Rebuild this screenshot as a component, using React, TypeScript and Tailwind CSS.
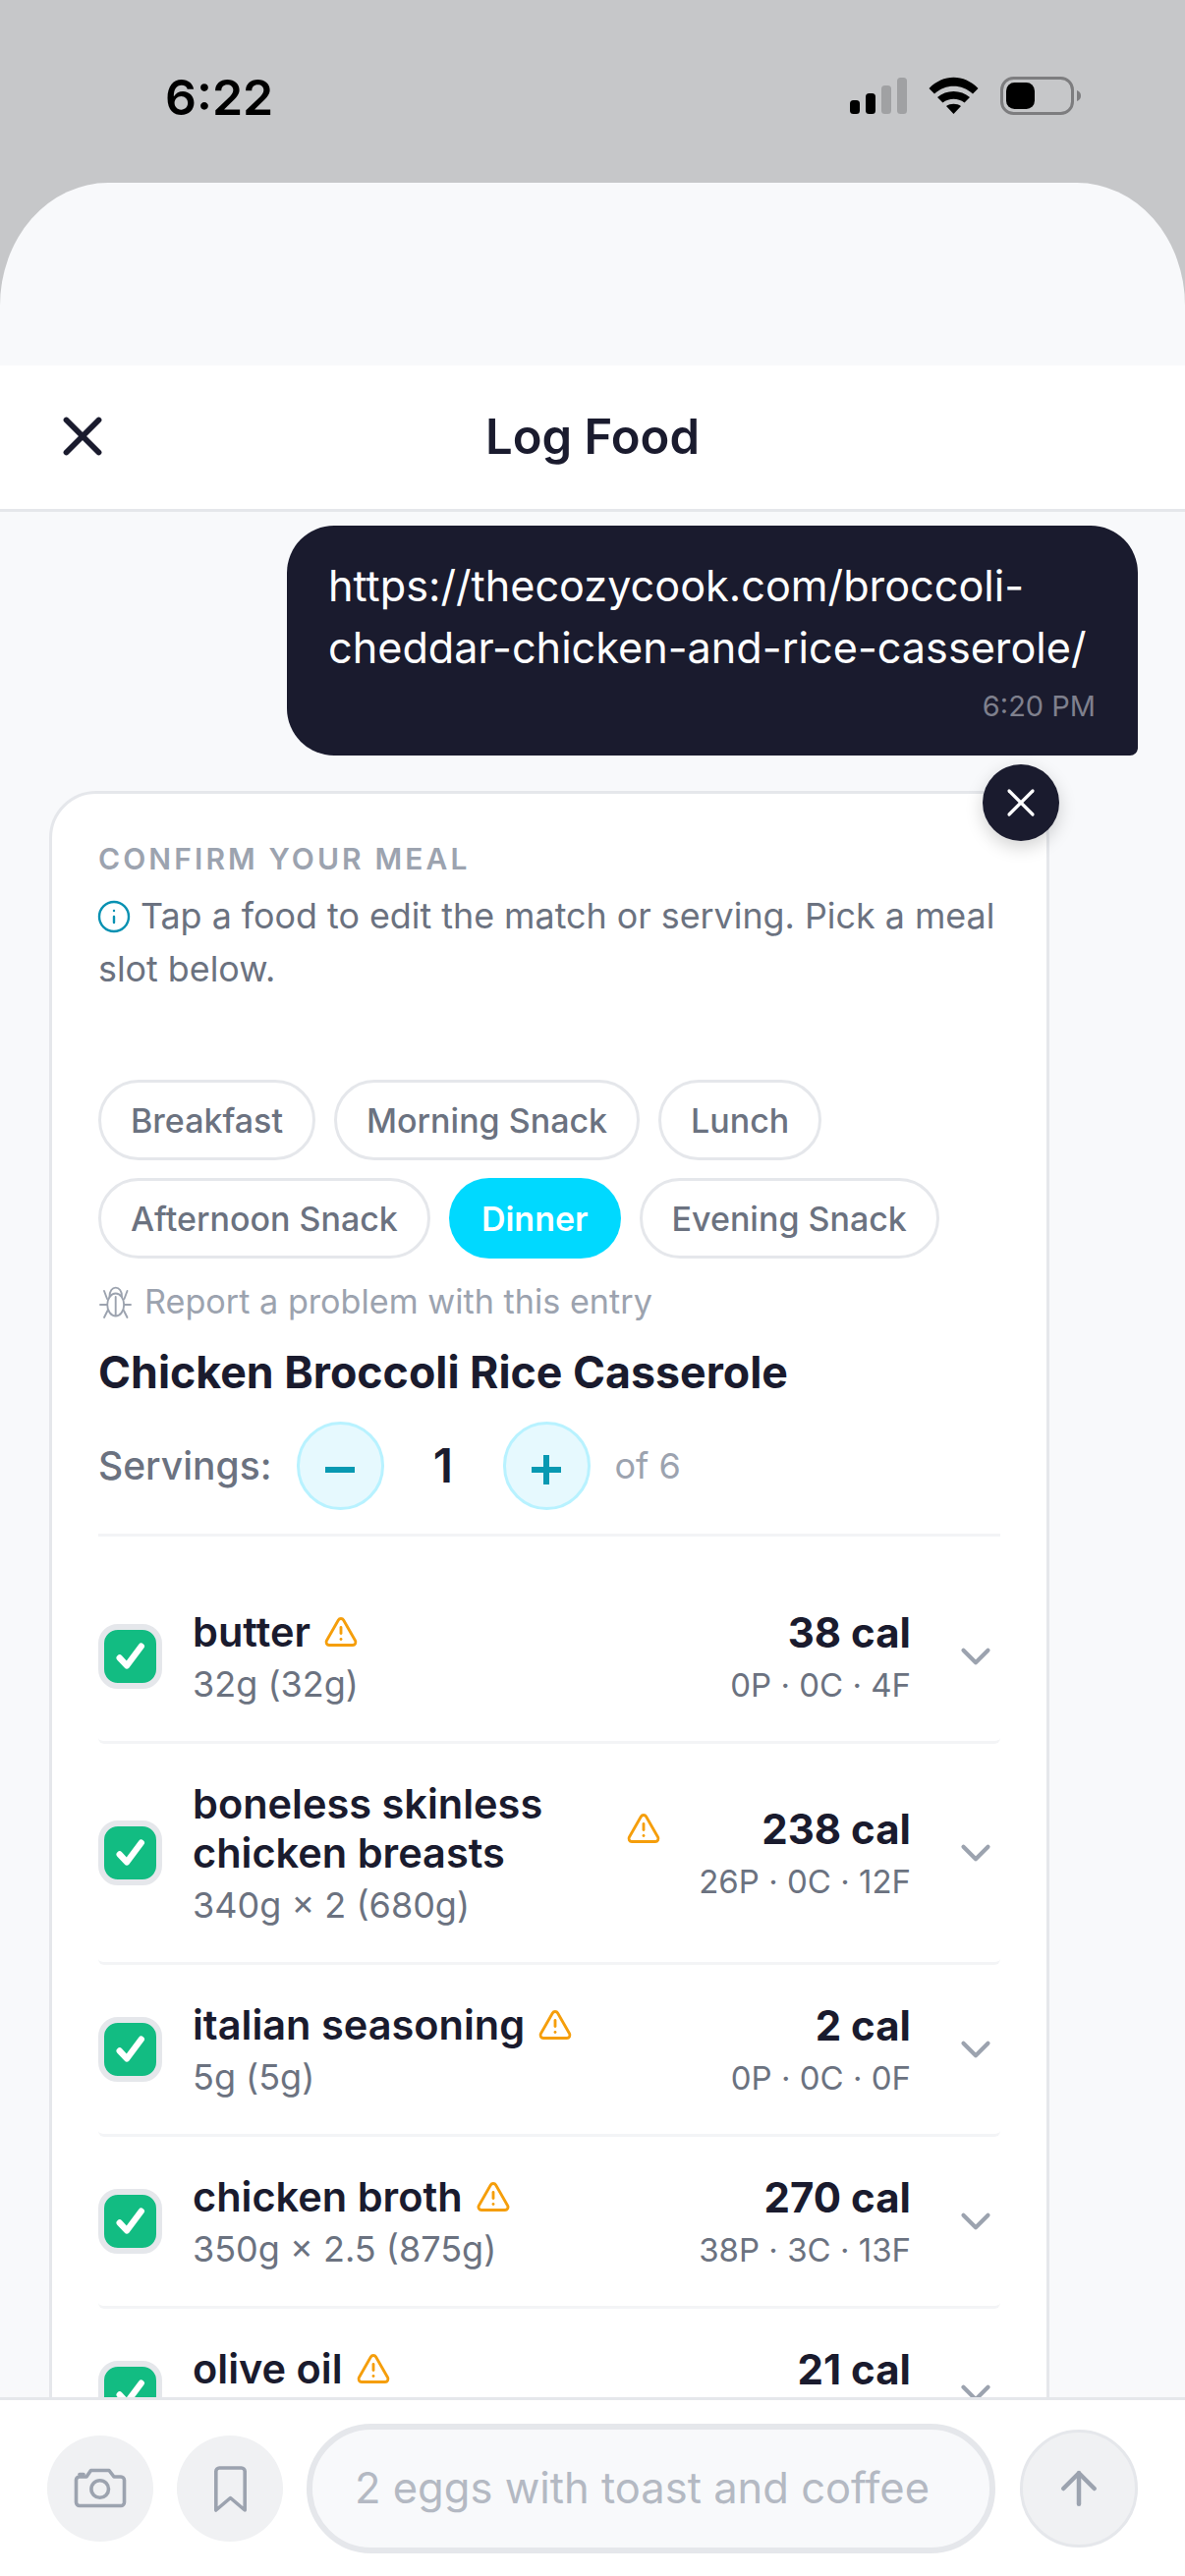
import { X, Info, TriangleAlert, ChevronDown, ArrowUp } from "lucide-react";

const slots = [
  ["Breakfast", "Morning Snack", "Lunch"],
  ["Afternoon Snack", "Dinner", "Evening Snack"],
];

const foods = [
  { name: "butter", amount: "32g (32g)", cal: "38 cal", macros: "0P · 0C · 4F" },
  { name: "boneless skinless chicken breasts", amount: "340g × 2 (680g)", cal: "238 cal", macros: "26P · 0C · 12F" },
  { name: "italian seasoning", amount: "5g (5g)", cal: "2 cal", macros: "0P · 0C · 0F" },
  { name: "chicken broth", amount: "350g × 2.5 (875g)", cal: "270 cal", macros: "38P · 3C · 13F" },
  { name: "olive oil", amount: "15g (15g)", cal: "21 cal", macros: "2P · 0C · 2F" },
];

function StatusIcons() {
  return (
    <svg width="240" height="44" viewBox="860 76 240 44" className="block">
      <rect x="865" y="102" width="10" height="14" rx="3.5" fill="#000" />
      <rect x="881" y="95" width="10" height="21" rx="3.5" fill="#000" />
      <rect x="897" y="87" width="10" height="29" rx="3.5" fill="#a0a1a3" />
      <rect x="913" y="79" width="10" height="37" rx="3.5" fill="#a0a1a3" />
      <path d="M945.5 90 C 960 75, 981 75, 995.5 90 L 990 95.5 C 979 85, 962 85, 951 95.5 Z" fill="#000" />
      <path d="M954 99 C 963 91, 978 91, 987 99 L 981.5 104.5 C 975 99.5, 966 99.5, 959.5 104.5 Z" fill="#000" />
      <path d="M963 108 C 967 105, 974 105, 978 108 L 970.5 116 Z" fill="#000" />
      <rect x="1019.5" y="79.5" width="72" height="36" rx="12" fill="none" stroke="#7d7d7f" strokeWidth="3" />
      <rect x="1024" y="84" width="29" height="27" rx="8.5" fill="#000" />
      <path d="M1096 92 C 1099 93, 1100 95, 1100 97.5 C 1100 100, 1099 102, 1096 103 Z" fill="#7d7d7f" />
    </svg>
  );
}

function BugIcon() {
  return (
    <svg width="36" height="36" viewBox="100 1306 36 36" fill="none" stroke="#9ca3af" strokeWidth="1.9" strokeLinecap="round" strokeLinejoin="round" className="shrink-0">
      <ellipse cx="117.7" cy="1327" rx="8.5" ry="11.5" />
      <path d="M111.5 1319 C 111 1306.5, 124.5 1306.5, 124 1319" />
      <path d="M117.7 1319 V1338" />
      <path d="M102 1327 H109 M126.5 1327 H133" />
      <path d="M106 1313 L109 1321 M129.5 1313 L126.5 1321" />
      <path d="M109.5 1333 L106 1340 M126 1333 L129.5 1340" />
    </svg>
  );
}

function CheckMark() {
  return (
    <svg width="54" height="54" viewBox="0 0 54 54" fill="none" stroke="#fff" strokeWidth="6.5" strokeLinecap="round" strokeLinejoin="round">
      <path d="M16 28.5 L23.5 36.5 L38.5 16.5" />
    </svg>
  );
}

function CameraIcon() {
  return (
    <svg width="60" height="50" viewBox="72 2508 60 50" fill="none" stroke="#9ca3af" strokeWidth="3.6" strokeLinejoin="round" strokeLinecap="round">
      <path d="M80.5 2521 H88 L92.5 2514.5 H111 L116 2521 H123 a3.5 3.5 0 0 1 3.5 3.5 V2547 a3.5 3.5 0 0 1 -3.5 3.5 H81 a3.5 3.5 0 0 1 -3.5 -3.5 V2524 a3.5 3.5 0 0 1 3 -3 Z" />
      <path d="M81 2518.5 H85" />
      <circle cx="101.7" cy="2533.5" r="8.8" />
    </svg>
  );
}

function BookmarkIcon() {
  return (
    <svg width="40" height="54" viewBox="214 2504 40 54" fill="none" stroke="#9ca3af" strokeWidth="3.6" strokeLinejoin="round" strokeLinecap="round">
      <path d="M219.8 2553 V2513.5 a3.5 3.5 0 0 1 3.5 -3.5 H245.7 a3.5 3.5 0 0 1 3.5 3.5 V2553 L234.5 2540.5 Z" />
    </svg>
  );
}

function Stepper({ plus }: { plus?: boolean }) {
  return (
    <div className="w-[89px] h-[90px] shrink-0 rounded-full border-[3px] border-[#b8f2ff] bg-[#e6f9fe] flex items-center justify-center">
      <svg width="30" height="30" viewBox="0 0 30 30" className="mt-[7px]" stroke="#0899b2" strokeWidth="6" fill="none">
        <path d="M0 15 H30" />
        {plus ? <path d="M15 0 V30" /> : null}
      </svg>
    </div>
  );
}

function FoodRow({ name, amount, cal, macros }: { name: string; amount: string; cal: string; macros: string }) {
  return (
    <div className="flex items-center border-b-[3px] border-[#f3f4f6] rounded-b-[6px] py-[36px]">
      <div className="w-[65px] h-[66px] shrink-0 rounded-[20px] border-[6px] border-[#e5e7eb] bg-[#12bc82] flex items-center justify-center">
        <CheckMark />
      </div>
      <div className="flex-1 min-w-0 ml-[31px] flex flex-col">
        <div className="flex items-center gap-[13px]">
          <span className="text-[41.5px] leading-[50px] font-semibold text-[#1a1b2e]">{name}</span>
          <TriangleAlert size={36} color="#f59e0b" strokeWidth={1.9} className="shrink-0" />
        </div>
        <span className="mt-[7px] text-[36px] leading-[43px] text-[#6b7280]">{amount}</span>
      </div>
      <div className="shrink-0 ml-[38px] flex flex-col items-end">
        <span className="text-[42px] leading-[52px] font-bold text-[#1a1b2e]">{cal}</span>
        <span className="mt-[6px] text-[33px] leading-[42px] text-[#6b7280]">{macros}</span>
      </div>
      <ChevronDown size={50} color="#9ca3af" strokeWidth={2} className="shrink-0 ml-[41px]" />
    </div>
  );
}

export default function App() {
  return (
    <div className="w-[1206px] h-[2622px] overflow-hidden flex flex-col bg-[#c6c7c9] font-['Inter',sans-serif]">
      <div className="h-[186px] shrink-0 flex items-start justify-between pl-[168px] pr-[106px]">
        <span className="mt-[68px] text-[50px] leading-[62px] font-semibold text-black">6:22</span>
        <div className="mt-[76px]">
          <StatusIcons />
        </div>
      </div>
      <div className="flex-1 min-h-0 flex flex-col bg-[#f8f9fb] rounded-tl-[110px_125px] rounded-tr-[110px_125px]">
        <div className="h-[186px] shrink-0" />
        <header className="h-[149px] shrink-0 relative flex items-center justify-center bg-white border-b-[3px] border-[#e5e7eb]">
          <X size={66} color="#1a1b2e" strokeWidth={2.1} className="absolute left-[51px] top-[39px]" />
          <h1 className="text-[49px] font-semibold text-[#1a1b2e]">Log Food</h1>
        </header>
        <main className="flex-1 min-h-0 overflow-hidden flex flex-col pt-[14px]">
          <div className="self-end mr-[48px] w-[866px] h-[234px] shrink-0 rounded-[48px] rounded-br-[8px] bg-[#1a1b2e] pl-[42px] pr-[40px] pt-[30px] flex flex-col">
            <p className="text-[43.2px] leading-[63px] text-white">https://thecozycook.com/broccoli-cheddar-chicken-and-rice-casserole/</p>
            <span className="self-end mr-[3px] text-[29px] leading-[44px] mt-[6px] text-[#7f808d]">6:20 PM</span>
          </div>
          <section className="relative ml-[50px] mt-[36px] w-[1018px] shrink-0 rounded-t-[48px] border-[3px] border-[#e5e7eb] bg-white px-[47px] pt-[46px]">
            <button className="absolute -top-[30px] -right-[13px] w-[78px] h-[78px] rounded-full bg-[#1a1b2e] flex items-center justify-center shadow-[0_6px_18px_rgba(0,0,0,0.18)]">
              <X size={48} color="#fff" strokeWidth={1.6} />
            </button>
            <div className="text-[30px] leading-[40px] font-semibold tracking-[3.1px] text-[#9ca3af]">CONFIRM YOUR MEAL</div>
            <p className="mt-[11px] text-[35.85px] leading-[54px] text-[#6b7280]">
              <Info size={36} color="#0891b2" strokeWidth={1.6} className="inline-block align-[-6px] -ml-[2px] mr-[9px]" />
              Tap a food to edit the match or serving. Pick a meal slot below.
            </p>
            <div className="mt-[86px] flex flex-col gap-[18px]">
              {slots.map((row, i) => (
                <div key={i} className="flex gap-[19px]">
                  {row.map((s) =>
                    s === "Dinner" ? (
                      <span key={s} className="h-[82px] flex items-center px-[33px] rounded-full bg-[#00d9ff] text-[34px] font-semibold text-white">{s}</span>
                    ) : (
                      <span key={s} className="h-[82px] flex items-center px-[30px] rounded-full border-[3px] border-[#e5e7eb] bg-white text-[34px] font-medium text-[#6b7280]">{s}</span>
                    )
                  )}
                </div>
              ))}
            </div>
            <div className="mt-[23px] flex items-center gap-[11px]">
              <BugIcon />
              <span className="text-[34.2px] leading-[42px] text-[#9ca3af]">Report a problem with this entry</span>
            </div>
            <h2 className="mt-[21px] text-[44.7px] leading-[60px] font-bold text-[#1a1b2e]">Chicken Broccoli Rice Casserole</h2>
            <div className="mt-[20px] pb-[24px] flex items-center border-b-[3px] border-[#f3f4f6]">
              <span className="text-[39px] font-medium text-[#6b7280] mr-[25px]">Servings:</span>
              <Stepper />
              <span className="w-[121px] text-center text-[48px] font-semibold text-[#1a1b2e]">1</span>
              <Stepper plus />
              <span className="ml-[25px] text-[36px] text-[#9ca3af]">of 6</span>
            </div>
            <div className="mt-[36px] flex flex-col">
              {foods.map((f) => (
                <FoodRow key={f.name} {...f} />
              ))}
            </div>
          </section>
        </main>
        <footer className="h-[182px] shrink-0 flex items-center bg-white border-t-[3px] border-[#e5e7eb] pl-[48px] pr-[48px]">
          <div className="w-[108px] h-[108px] shrink-0 rounded-full bg-[#f0f1f3] flex items-center justify-center">
            <CameraIcon />
          </div>
          <div className="ml-[24px] w-[108px] h-[108px] shrink-0 rounded-full bg-[#f0f1f3] flex items-center justify-center">
            <BookmarkIcon />
          </div>
          <div className="ml-[24px] w-[701px] h-[132px] shrink-0 rounded-full border-[6px] border-[#e5e7eb] bg-[#f8f9fb] flex items-center pl-[43px]">
            <span className="text-[43.5px] whitespace-nowrap text-[#b4b9c3]">2 eggs with toast and coffee</span>
          </div>
          <div className="ml-[25px] w-[120px] h-[120px] shrink-0 rounded-full bg-[#f0f1f3] border-[3px] border-[#e5e7eb] flex items-center justify-center">
            <ArrowUp size={54} color="#9ca3af" strokeWidth={2} />
          </div>
        </footer>
      </div>
    </div>
  );
}
